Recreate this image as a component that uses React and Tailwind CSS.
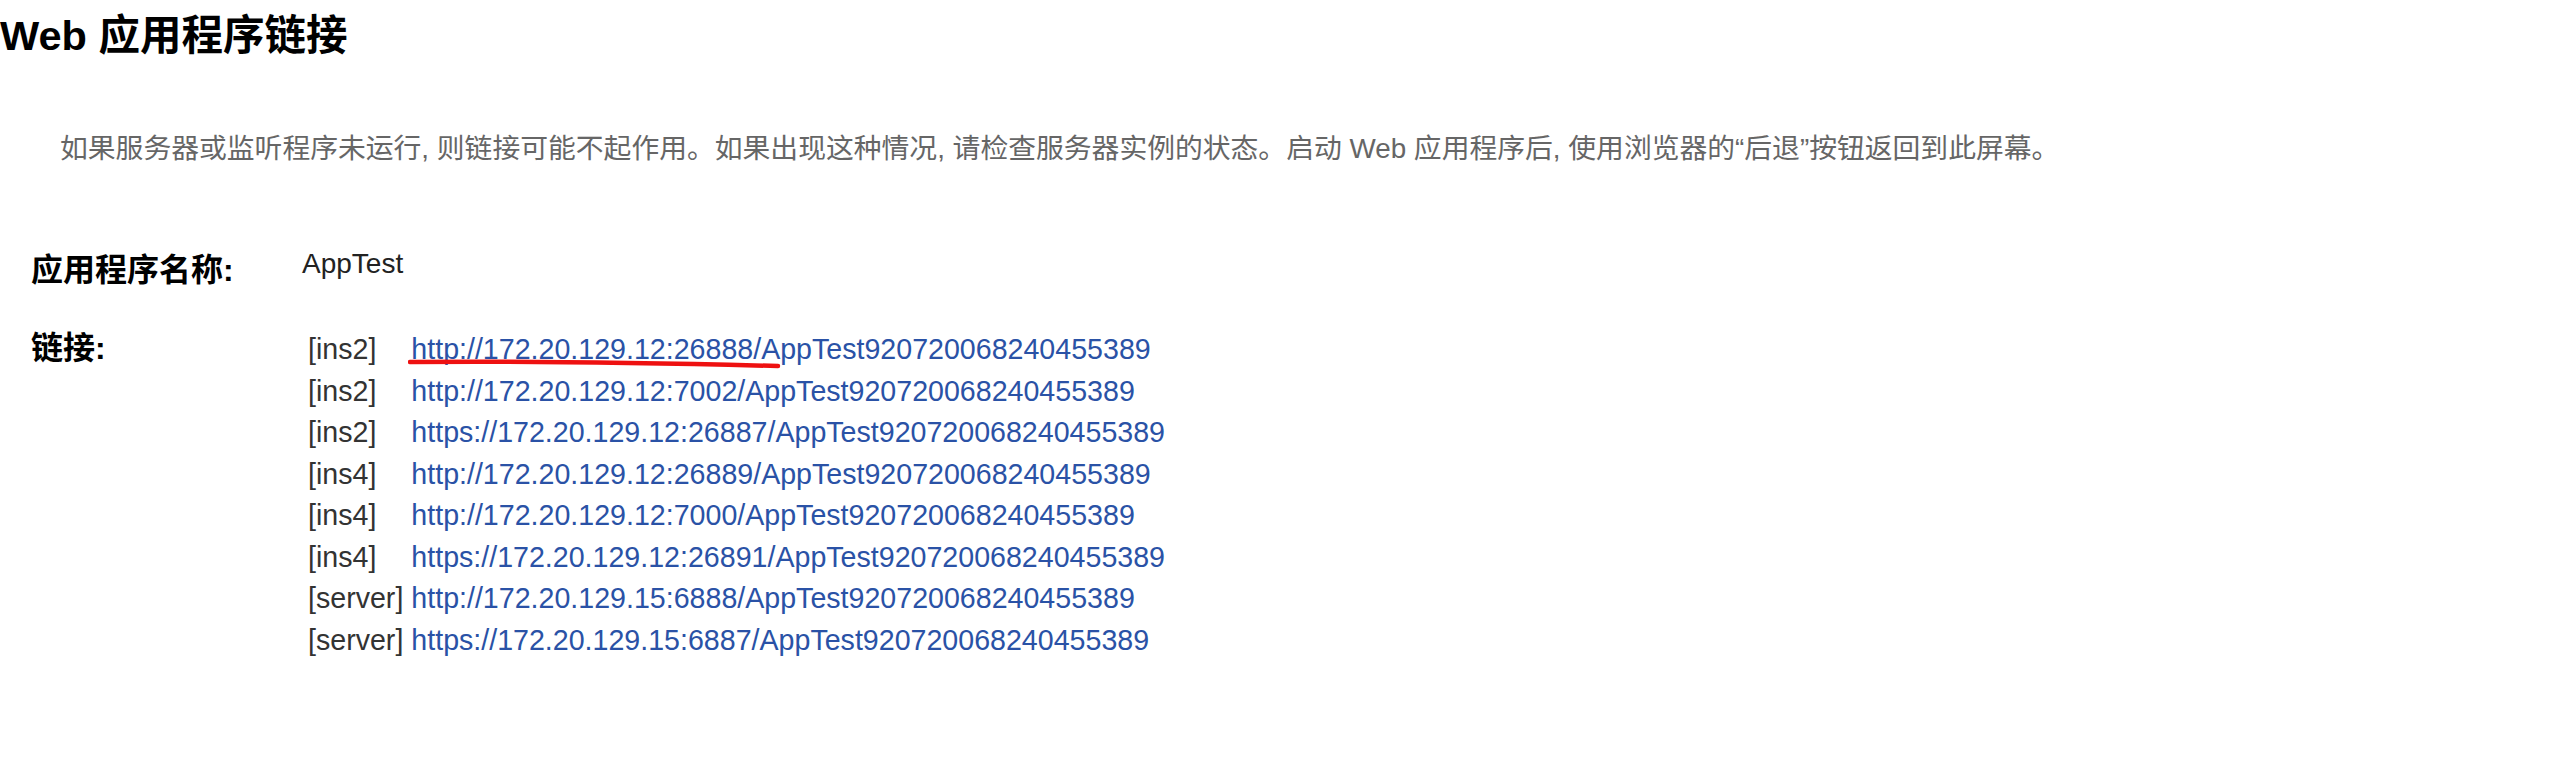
export default function App() {
  const links = [
    ["[ins2]", "http://172.20.129.12:26888/AppTest920720068240455389"],
    ["[ins2]", "http://172.20.129.12:7002/AppTest920720068240455389"],
    ["[ins2]", "https://172.20.129.12:26887/AppTest920720068240455389"],
    ["[ins4]", "http://172.20.129.12:26889/AppTest920720068240455389"],
    ["[ins4]", "http://172.20.129.12:7000/AppTest920720068240455389"],
    ["[ins4]", "https://172.20.129.12:26891/AppTest920720068240455389"],
    ["[server]", "http://172.20.129.15:6888/AppTest920720068240455389"],
    ["[server]", "https://172.20.129.15:6887/AppTest920720068240455389"],
  ];
  return (
    <div className="relative w-[2560px] h-[775px] bg-white font-['Liberation_Sans','Noto_Sans_CJK_SC',sans-serif] text-[#222]">
      <h1 className="h-[72px] leading-[72px] text-[41.5px] font-bold text-black whitespace-nowrap">
        Web 应用程序链接
      </h1>
      <p className="mt-[57px] pl-[60px] leading-[40px] text-[27.8px] text-[#666] whitespace-nowrap">
        如果服务器或监听程序未运行, 则链接可能不起作用。如果出现这种情况, 请检查服务器实例的状态。启动 Web 应用程序后, 使用浏览器的“后退”按钮返回到此屏幕。
      </p>
      <div className="mt-[74px] pl-[31px] flex flex-col gap-[37px]">
        <div className="flex items-start">
          <div className="w-[271px] text-[32px] font-bold text-black leading-[42px] pt-[6px]">应用程序名称:</div>
          <div className="text-[28px] leading-[42px] text-[#222]">AppTest</div>
        </div>
        <div className="flex items-start">
          <div className="w-[271px] text-[32px] font-bold text-black leading-[41.5px]">链接:</div>
          <div className="grid grid-cols-[max-content_max-content] gap-x-[8px] pl-[6px] pt-[1px] text-[28.6px] leading-[41.5px]">
            {links.map(([k, u], i) => (
              <div key={i} className="contents">
                <span className="text-[#333]">{k}</span>
                <a className="text-[#2a52a6] whitespace-nowrap">{u}</a>
              </div>
            ))}
          </div>
        </div>
      </div>
      <svg className="absolute left-[408px] top-[357px]" width="376" height="14" viewBox="0 0 376 14">
        <path d="M2 5 C 100 4, 250 6, 370 9" stroke="#ee1111" strokeWidth="4.5" fill="none" strokeLinecap="round" />
      </svg>
    </div>
  );
}
